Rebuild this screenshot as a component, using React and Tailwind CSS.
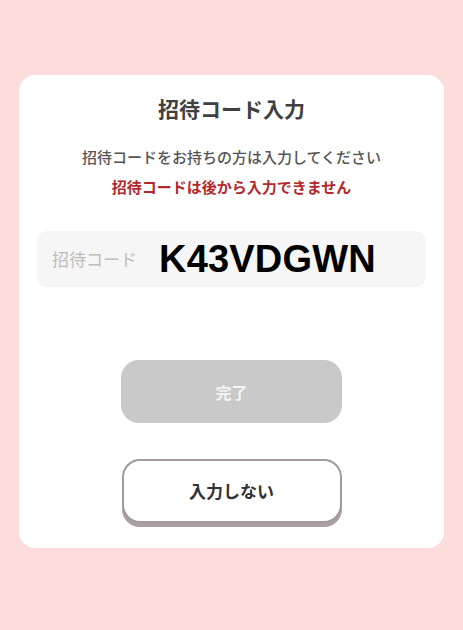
import React from 'react'

const jp = { fontFamily: '"Noto Sans CJK JP", "Noto Sans", sans-serif' }

const App = () => {
  return (
    <div className="w-[463px] h-[630px] bg-[#fddcdc] pt-[75px] px-[19px]" style={jp}>
      <div className="w-[425px] h-[473px] bg-white rounded-[16px] flex flex-col items-center pt-[20px]">
        <h1 className="text-[21px] leading-[26px] font-bold text-[#404040]">招待コード入力</h1>
        <p className="mt-[26px] text-[15px] leading-[20px] font-medium text-[#555]">
          招待コードをお持ちの方は入力してください
        </p>
        <p className="mt-[10px] text-[15px] leading-[20px] font-bold text-[#b3272d]">
          招待コードは後から入力できません
        </p>
        <div className="mt-[34px] self-stretch mx-[18px] h-[56px] rounded-[10px] bg-[#f6f6f6] flex items-center pl-[15px] gap-[22px]">
          <span className="text-[17px] text-[#bdbdbd]">招待コード</span>
          <span
            className="text-[38px] leading-none font-bold text-black tracking-[0.2px]"
            style={{ fontFamily: '"Liberation Sans", Arial, sans-serif' }}
          >
            K43VDGWN
          </span>
        </div>
        <button className="mt-[73px] w-[221px] h-[63px] rounded-[18px] bg-[#c9c9c9] text-[16px] font-bold text-[#f4f4f4]">
          完了
        </button>
        <button className="mt-[36px] w-[220px] h-[64px] rounded-[18px] bg-white border-2 border-[#a39a9c] shadow-[0_4px_0_#aa9fa2] text-[17px] font-bold text-[#333]">
          入力しない
        </button>
      </div>
    </div>
  )
}

export default App
